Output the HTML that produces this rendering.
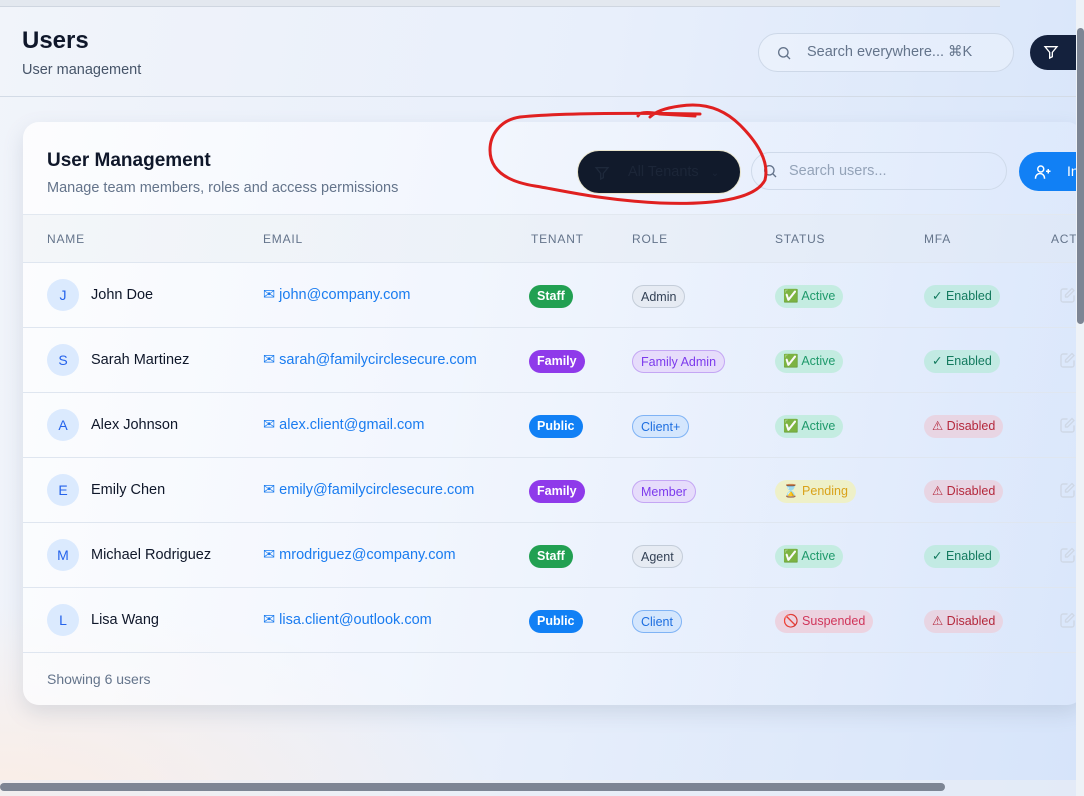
<!DOCTYPE html>
<html><head><meta charset="utf-8"><style>
*{box-sizing:border-box;margin:0;padding:0}
body{width:1084px;height:796px;overflow:hidden;font-family:"Liberation Sans",sans-serif;background:linear-gradient(100deg,#f1f4fa 0%,#e8effb 50%,#d6e4fa 100%);position:relative;color:#0f172a}
.bgw{position:absolute;left:0;top:600px;width:500px;height:196px;background:radial-gradient(ellipse at 0% 100%,rgba(253,236,225,.8),rgba(253,236,225,0) 70%)}
.top{position:absolute;left:0;top:0;width:1000px;height:7px;background:#e3e8ef;border-bottom:1px solid #cfd6e0}
.hdr{position:absolute;left:0;top:7px;width:1076px;height:90px;border-bottom:1px solid #d3dbe6}
h1{position:absolute;left:22px;top:27px;font-size:24px;font-weight:700;color:#0f172a}
.sub{position:absolute;left:22px;top:62px;font-size:14.5px;color:#475569}
.gs{position:absolute;left:758px;top:33px;width:256px;height:39px;border:1px solid #cdd8e8;border-radius:20px;background:rgba(255,255,255,.25);font-size:14.5px;color:#64748b;padding:10px 0 0 48px}
.fb{position:absolute;left:1030px;top:35px;width:46px;height:35px;background:#14213d;border-radius:18px 0 0 18px}
.card{position:absolute;left:23px;top:122px;width:1060px;height:583px;border-radius:16px;background:linear-gradient(100deg,rgba(255,255,255,.8),rgba(240,245,255,.55) 60%,rgba(220,232,252,.5));box-shadow:0 8px 20px rgba(100,116,139,.18)}
.ct{position:absolute;left:47px;top:150px;font-size:19px;font-weight:700}
.cs{position:absolute;left:47px;top:180px;font-size:14.5px;color:#64748b}
.tn{position:absolute;left:577px;top:150px;width:164px;height:44px;border-radius:22px;background:#111a2b;border:1px solid #e8e4cc;color:#1c2638;font-size:14.5px;padding:13px 0 0 50px}
.us{position:absolute;left:751px;top:152px;width:256px;height:38px;border:1px solid #cfdaea;border-radius:19px;font-size:14.5px;color:#94a3b8;padding:10px 0 0 37px}
.inv{position:absolute;left:1019px;top:152px;width:65px;height:39px;border-radius:20px 0 0 20px;background:#1180f5;color:#fff;font-size:14px;padding:11px 0 0 48px}
.th{position:absolute;left:23px;top:214px;width:1053px;height:48px;border-top:1px solid #e2e8f0;background:rgba(226,232,240,.3)}
.thl{position:absolute;top:232px;font-size:12px;letter-spacing:.8px;color:#64748b}
.row{position:absolute;left:23px;width:1053px;height:65px;border-top:1px solid #dfe6f0}
.av{position:absolute;left:47px;width:32px;height:32px;border-radius:16px;background:#dbeafe;color:#2563eb;font-size:14px;text-align:center;line-height:32px}
.nm{position:absolute;left:91px;font-size:14.5px;color:#0f172a}
.em{position:absolute;left:263px;font-size:14.5px;color:#1a7cf0}
.bd{position:absolute;height:23px;border-radius:12px;font-size:12.5px;line-height:23px;padding:0 8px;white-space:nowrap}
.foot{position:absolute;left:47px;top:671px;font-size:14px;color:#64748b}
.vs{position:absolute;left:1076px;top:0;width:8px;height:796px;background:#eef2f7}
.vt{position:absolute;left:1077px;top:28px;width:7px;height:296px;border-radius:4px;background:#7d8594}
.hs{position:absolute;left:0;top:780px;width:1076px;height:16px;background:rgba(235,239,245,.6)}
.ht{position:absolute;left:0;top:783px;width:945px;height:8px;border-radius:4px;background:#7d8594}
</style></head><body>
<div class="bgw"></div>
<div class="top"></div>
<div class="hdr"></div>
<h1>Users</h1><div class="sub">User management</div>
<div class="gs"><svg style="position:absolute;left:17px;top:11px" width="16" height="16" viewBox="0 0 24 24" fill="none" stroke="#64748b" stroke-width="2"><circle cx="11" cy="11" r="7"/><path d="M16.5 16.5L21 21"/></svg>Search everywhere... ⌘K</div>
<div class="fb"><svg style="position:absolute;left:13px;top:9px" width="16" height="16" viewBox="0 0 24 24" fill="none" stroke="#fff" stroke-width="2"><path d="M3 4h18l-7 8.5V19l-4 2v-8.5z"/></svg></div>
<div class="card"></div>
<div class="ct">User Management</div>
<div class="cs">Manage team members, roles and access permissions</div>
<div class="tn"><svg style="position:absolute;left:16px;top:14px" width="16" height="16" viewBox="0 0 24 24" fill="none" stroke="#1e293b" stroke-width="2"><path d="M3 4h18l-7 8.5V19l-4 2v-8.5z"/></svg>All Tenants <span style="margin-left:8px;font-size:10px">⌄</span></div>
<div class="us"><svg style="position:absolute;left:10px;top:10px" width="16" height="16" viewBox="0 0 24 24" fill="none" stroke="#64748b" stroke-width="2"><circle cx="11" cy="11" r="7"/><path d="M16.5 16.5L21 21"/></svg>Search users...</div>
<div class="inv"><svg style="position:absolute;left:15px;top:11px" width="18" height="18" viewBox="0 0 24 24" fill="none" stroke="#fff" stroke-width="2"><circle cx="9" cy="8" r="4"/><path d="M2 21v-1a6 6 0 0 1 12 0v1M19 8v6M16 11h6"/></svg>In</div>
<div class="th"></div>
<div class="thl" style="left:47px">NAME</div><div class="thl" style="left:263px">EMAIL</div><div class="thl" style="left:531px">TENANT</div><div class="thl" style="left:632px">ROLE</div><div class="thl" style="left:775px">STATUS</div><div class="thl" style="left:924px">MFA</div><div class="thl" style="left:1051px">ACT</div>

<div class="row" style="top:262px"></div><div class="row" style="top:327px"></div><div class="row" style="top:392px"></div><div class="row" style="top:457px"></div><div class="row" style="top:522px"></div><div class="row" style="top:587px"></div><div class="row" style="top:652px;height:0"></div>

<div class="av" style="top:279px">J</div><div class="nm" style="top:287px">John Doe</div><div class="em" style="top:287px">✉ john@company.com</div>
<div class="bd" style="left:529px;top:285px;background:#22a052;color:#fff;font-weight:700">Staff</div>
<div class="bd" style="left:632px;top:285px;background:#e6ebf3;border:1px solid #c4cdd9;color:#334155">Admin</div>
<div class="bd" style="left:775px;top:285px;background:#c4ece1;color:#1f9a6b">✅ Active</div>
<div class="bd" style="left:924px;top:285px;background:#c2eae3;color:#137a5e">✓ Enabled</div>

<div class="av" style="top:344px">S</div><div class="nm" style="top:352px">Sarah Martinez</div><div class="em" style="top:352px">✉ sarah@familycirclesecure.com</div>
<div class="bd" style="left:529px;top:350px;background:#8f3aea;color:#fff;font-weight:700">Family</div>
<div class="bd" style="left:632px;top:350px;background:#e6dcfb;border:1px solid #c4a6f4;color:#7c3aed">Family Admin</div>
<div class="bd" style="left:775px;top:350px;background:#c4ece1;color:#1f9a6b">✅ Active</div>
<div class="bd" style="left:924px;top:350px;background:#c2eae3;color:#137a5e">✓ Enabled</div>

<div class="av" style="top:409px">A</div><div class="nm" style="top:417px">Alex Johnson</div><div class="em" style="top:417px">✉ alex.client@gmail.com</div>
<div class="bd" style="left:529px;top:415px;background:#1180f5;color:#fff;font-weight:700">Public</div>
<div class="bd" style="left:632px;top:415px;background:#d4e6fd;border:1px solid #7fb3f5;color:#1d6ee0">Client+</div>
<div class="bd" style="left:775px;top:415px;background:#c4ece1;color:#1f9a6b">✅ Active</div>
<div class="bd" style="left:924px;top:415px;background:#e8d5e3;color:#b4283c">⚠ Disabled</div>

<div class="av" style="top:474px">E</div><div class="nm" style="top:482px">Emily Chen</div><div class="em" style="top:482px">✉ emily@familycirclesecure.com</div>
<div class="bd" style="left:529px;top:480px;background:#8f3aea;color:#fff;font-weight:700">Family</div>
<div class="bd" style="left:632px;top:480px;background:#e6dcfb;border:1px solid #c4a6f4;color:#7c3aed">Member</div>
<div class="bd" style="left:775px;top:480px;background:#eef0c8;color:#d9a21a">⌛ Pending</div>
<div class="bd" style="left:924px;top:480px;background:#e8d5e3;color:#b4283c">⚠ Disabled</div>

<div class="av" style="top:539px">M</div><div class="nm" style="top:547px">Michael Rodriguez</div><div class="em" style="top:547px">✉ mrodriguez@company.com</div>
<div class="bd" style="left:529px;top:545px;background:#22a052;color:#fff;font-weight:700">Staff</div>
<div class="bd" style="left:632px;top:545px;background:#e6ebf3;border:1px solid #c4cdd9;color:#334155">Agent</div>
<div class="bd" style="left:775px;top:545px;background:#c4ece1;color:#1f9a6b">✅ Active</div>
<div class="bd" style="left:924px;top:545px;background:#c2eae3;color:#137a5e">✓ Enabled</div>

<div class="av" style="top:604px">L</div><div class="nm" style="top:612px">Lisa Wang</div><div class="em" style="top:612px">✉ lisa.client@outlook.com</div>
<div class="bd" style="left:529px;top:610px;background:#1180f5;color:#fff;font-weight:700">Public</div>
<div class="bd" style="left:632px;top:610px;background:#d4e6fd;border:1px solid #7fb3f5;color:#1d6ee0">Client</div>
<div class="bd" style="left:775px;top:610px;background:#ecd3e0;color:#d0355a">🚫 Suspended</div>
<div class="bd" style="left:924px;top:610px;background:#e8d5e3;color:#b4283c">⚠ Disabled</div>

<svg style="position:absolute;left:0;top:0" width="1084" height="796">
<defs><g id="ed" fill="none" stroke="#cfd8e6" stroke-width="1.4" stroke-linecap="round" stroke-linejoin="round"><path d="M7 1H3a2 2 0 0 0-2 2v9a2 2 0 0 0 2 2h9a2 2 0 0 0 2-2V8"/><path d="M12 0.5l2 2-6.5 6.5H5.5V7z"/></g></defs>
<use href="#ed" x="1060" y="288"/><use href="#ed" x="1060" y="353"/><use href="#ed" x="1060" y="418"/><use href="#ed" x="1060" y="483"/><use href="#ed" x="1060" y="548"/><use href="#ed" x="1060" y="613"/>
<path d="M695 116 L660 114 Q640 110 638 116 M700 114 C640 113 560 113 520 117 C500 120 490 135 490 150 C490 172 510 182 535 186 C560 190 600 200 660 203 C710 205 755 200 765 180 C770 160 755 140 740 125 C725 110 705 102 680 106 C665 108 655 112 650 117" fill="none" stroke="#e02020" stroke-width="3" stroke-linecap="round"/>
</svg>
<div class="foot">Showing 6 users</div>
<div class="vs"></div><div class="vt"></div>
<div class="hs"></div><div class="ht"></div>
</body></html>
